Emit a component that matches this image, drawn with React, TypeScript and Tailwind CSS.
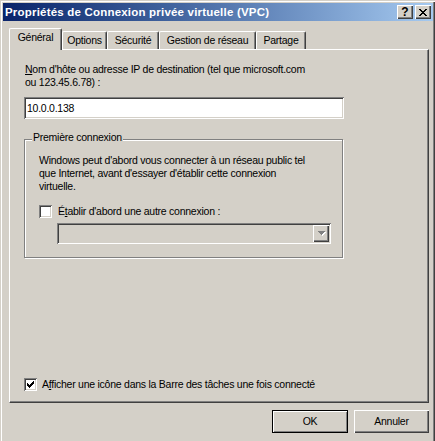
const raised =
  "shadow-[inset_1px_1px_0_#ffffff,inset_-1px_-1px_0_#404040,inset_-2px_-2px_0_#808080]";
const sunken =
  "shadow-[inset_1px_1px_0_#808080,inset_-1px_-1px_0_#ffffff,inset_2px_2px_0_#404040,inset_-2px_-2px_0_#d4d0c8]";

function CloseGlyph() {
  return (
    <svg width="8" height="7" viewBox="0 0 8 7" shapeRendering="crispEdges">
      <path
        fill="#000"
        d="M0 0h2v1h-2zM6 0h2v1h-2zM1 1h2v1h-2zM5 1h2v1h-2zM2 2h4v1h-4zM3 3h2v1h-2zM2 4h4v1h-4zM1 5h2v1h-2zM5 5h2v1h-2zM0 6h2v1h-2zM6 6h2v1h-2z"
      />
    </svg>
  );
}

function CheckGlyph() {
  return (
    <svg width="7" height="7" viewBox="0 0 7 7" shapeRendering="crispEdges">
      <path
        fill="#000"
        d="M6 0h1v1h-1zM5 1h2v1h-2zM0 2h1v1h-1zM4 2h3v1h-3zM0 3h2v1h-2zM3 3h3v1h-3zM0 4h5v1h-5zM1 5h3v1h-3zM2 6h1v1h-1z"
      />
    </svg>
  );
}

function ArrowGlyph() {
  return (
    <svg width="8" height="5" viewBox="0 0 8 5" shapeRendering="crispEdges">
      <path fill="#fff" d="M1 1h7v1h-7zM2 2h5v1h-5zM3 3h3v1h-3zM4 4h1v1h-1z" />
      <path fill="#808080" d="M0 0h7v1h-7zM1 1h5v1h-5zM2 2h3v1h-3zM3 3h1v1h-1z" />
    </svg>
  );
}

function Checkbox({ checked }: { checked?: boolean }) {
  return (
    <div className={`w-[13px] h-[13px] shrink-0 bg-white flex items-center justify-center ${sunken}`}>
      {checked && <CheckGlyph />}
    </div>
  );
}

const tabs = [
  { label: "Options", w: "w-[45px]" },
  { label: "Sécurité", w: "w-[52px]" },
  { label: "Gestion de réseau", w: "w-[97px]" },
  { label: "Partage", w: "w-[50px]" },
];

export default function App() {
  return (
    <div className="w-[435px] h-[441px] overflow-hidden bg-[#d4d0c8] pt-[3px] pl-[3px] pr-[2px] text-[10.5px] tracking-[-0.25px] leading-[13px] text-black font-['Liberation_Sans',Arial,sans-serif] shadow-[inset_1px_1px_0_#d4d0c8,inset_2px_2px_0_#ffffff,inset_-1px_0_0_#404040,inset_-2px_0_0_#808080]">
      {/* title bar */}
      <div className="h-[18px] flex items-center pl-[2px] pr-[2px] bg-linear-to-r from-[#0a246a] to-[#a6caf0]">
        <span className="flex-1 font-bold text-[11.5px] tracking-[0.2px] text-white whitespace-nowrap">
          Propriétés de Connexion privée virtuelle (VPC)
        </span>
        <div className="flex gap-[2px]">
          <div className={`w-[16px] h-[14px] bg-[#d4d0c8] flex items-center justify-center font-bold text-[12px] tracking-normal leading-none ${raised}`}>
            ?
          </div>
          <div className={`w-[16px] h-[14px] bg-[#d4d0c8] flex items-center justify-center ${raised}`}>
            <CloseGlyph />
          </div>
        </div>
      </div>

      {/* tabs */}
      <div className="ml-[6px] mt-[7px] h-[21px] flex items-end">
        <div className="relative z-10 -mb-px h-[22px] w-[53px] bg-[#d4d0c8] border-l border-t border-r border-white border-r-[#404040] rounded-t-[2px] shadow-[inset_-1px_0_0_#808080] flex justify-center pt-[2px]">
          Général
        </div>
        {tabs.map((t) => (
          <div
            key={t.label}
            className={`${t.w} h-[18px] border-l border-t border-r border-white border-r-[#404040] rounded-t-[2px] shadow-[inset_-1px_0_0_#808080] flex justify-center pt-[2px] whitespace-nowrap`}
          >
            {t.label}
          </div>
        ))}
      </div>

      {/* panel */}
      <div className="ml-[6px] w-[420px] h-[354px] border border-white border-r-[#404040] border-b-[#404040] shadow-[inset_-1px_-1px_0_#808080] flex flex-col pl-[14px] pt-[13px] pb-[11px]">
        <p className="ml-px">
          <span className="underline">N</span>om d'hôte ou adresse IP de destination (tel que microsoft.com
          <br />
          ou 123.45.6.78) :
        </p>
        <div className={`mt-[8px] w-[320px] h-[22px] bg-white flex items-center pl-[3px] ${sunken}`}>
          10.0.0.138
        </div>

        {/* group box */}
        <div className="relative mt-[20px] w-[319px] h-[119px] border border-[#808080] shadow-[inset_1px_1px_0_#ffffff,1px_1px_0_#ffffff] pl-[14px] pt-[14px]">
          <span className="absolute -top-[9px] left-[7px] px-px bg-[#d4d0c8]">Première connexion</span>
          <p>
            Windows peut d'abord vous connecter à un réseau public tel
            <br />
            que Internet, avant d'essayer d'établir cette connexion
            <br />
            virtuelle.
          </p>
          <div className="mt-[12px] flex items-center gap-[6px]">
            <Checkbox />
            <span>
              É<span className="underline">t</span>ablir d'abord une autre connexion :
            </span>
          </div>
          <div className={`mt-[5px] ml-[18px] w-[274px] h-[21px] p-[2px] flex justify-end ${sunken}`}>
            <div className={`w-[16px] h-[17px] bg-[#d4d0c8] flex items-center justify-center pl-px ${raised}`}>
              <ArrowGlyph />
            </div>
          </div>
        </div>

        <div className="mt-auto flex items-center gap-[5px]">
          <Checkbox checked />
          <span>
            A<span className="underline">f</span>ficher une icône dans la Barre des tâches une fois connecté
          </span>
        </div>
      </div>

      {/* buttons */}
      <div className="ml-[6px] w-[420px] mt-[7px] flex justify-end gap-[6px]">
        <div className="w-[76px] h-[23px] border border-black flex items-center justify-center shadow-[inset_1px_1px_0_#ffffff,inset_-1px_-1px_0_#808080]">
          OK
        </div>
        <div className={`w-[75px] h-[23px] flex items-center justify-center ${raised}`}>Annuler</div>
      </div>
    </div>
  );
}
